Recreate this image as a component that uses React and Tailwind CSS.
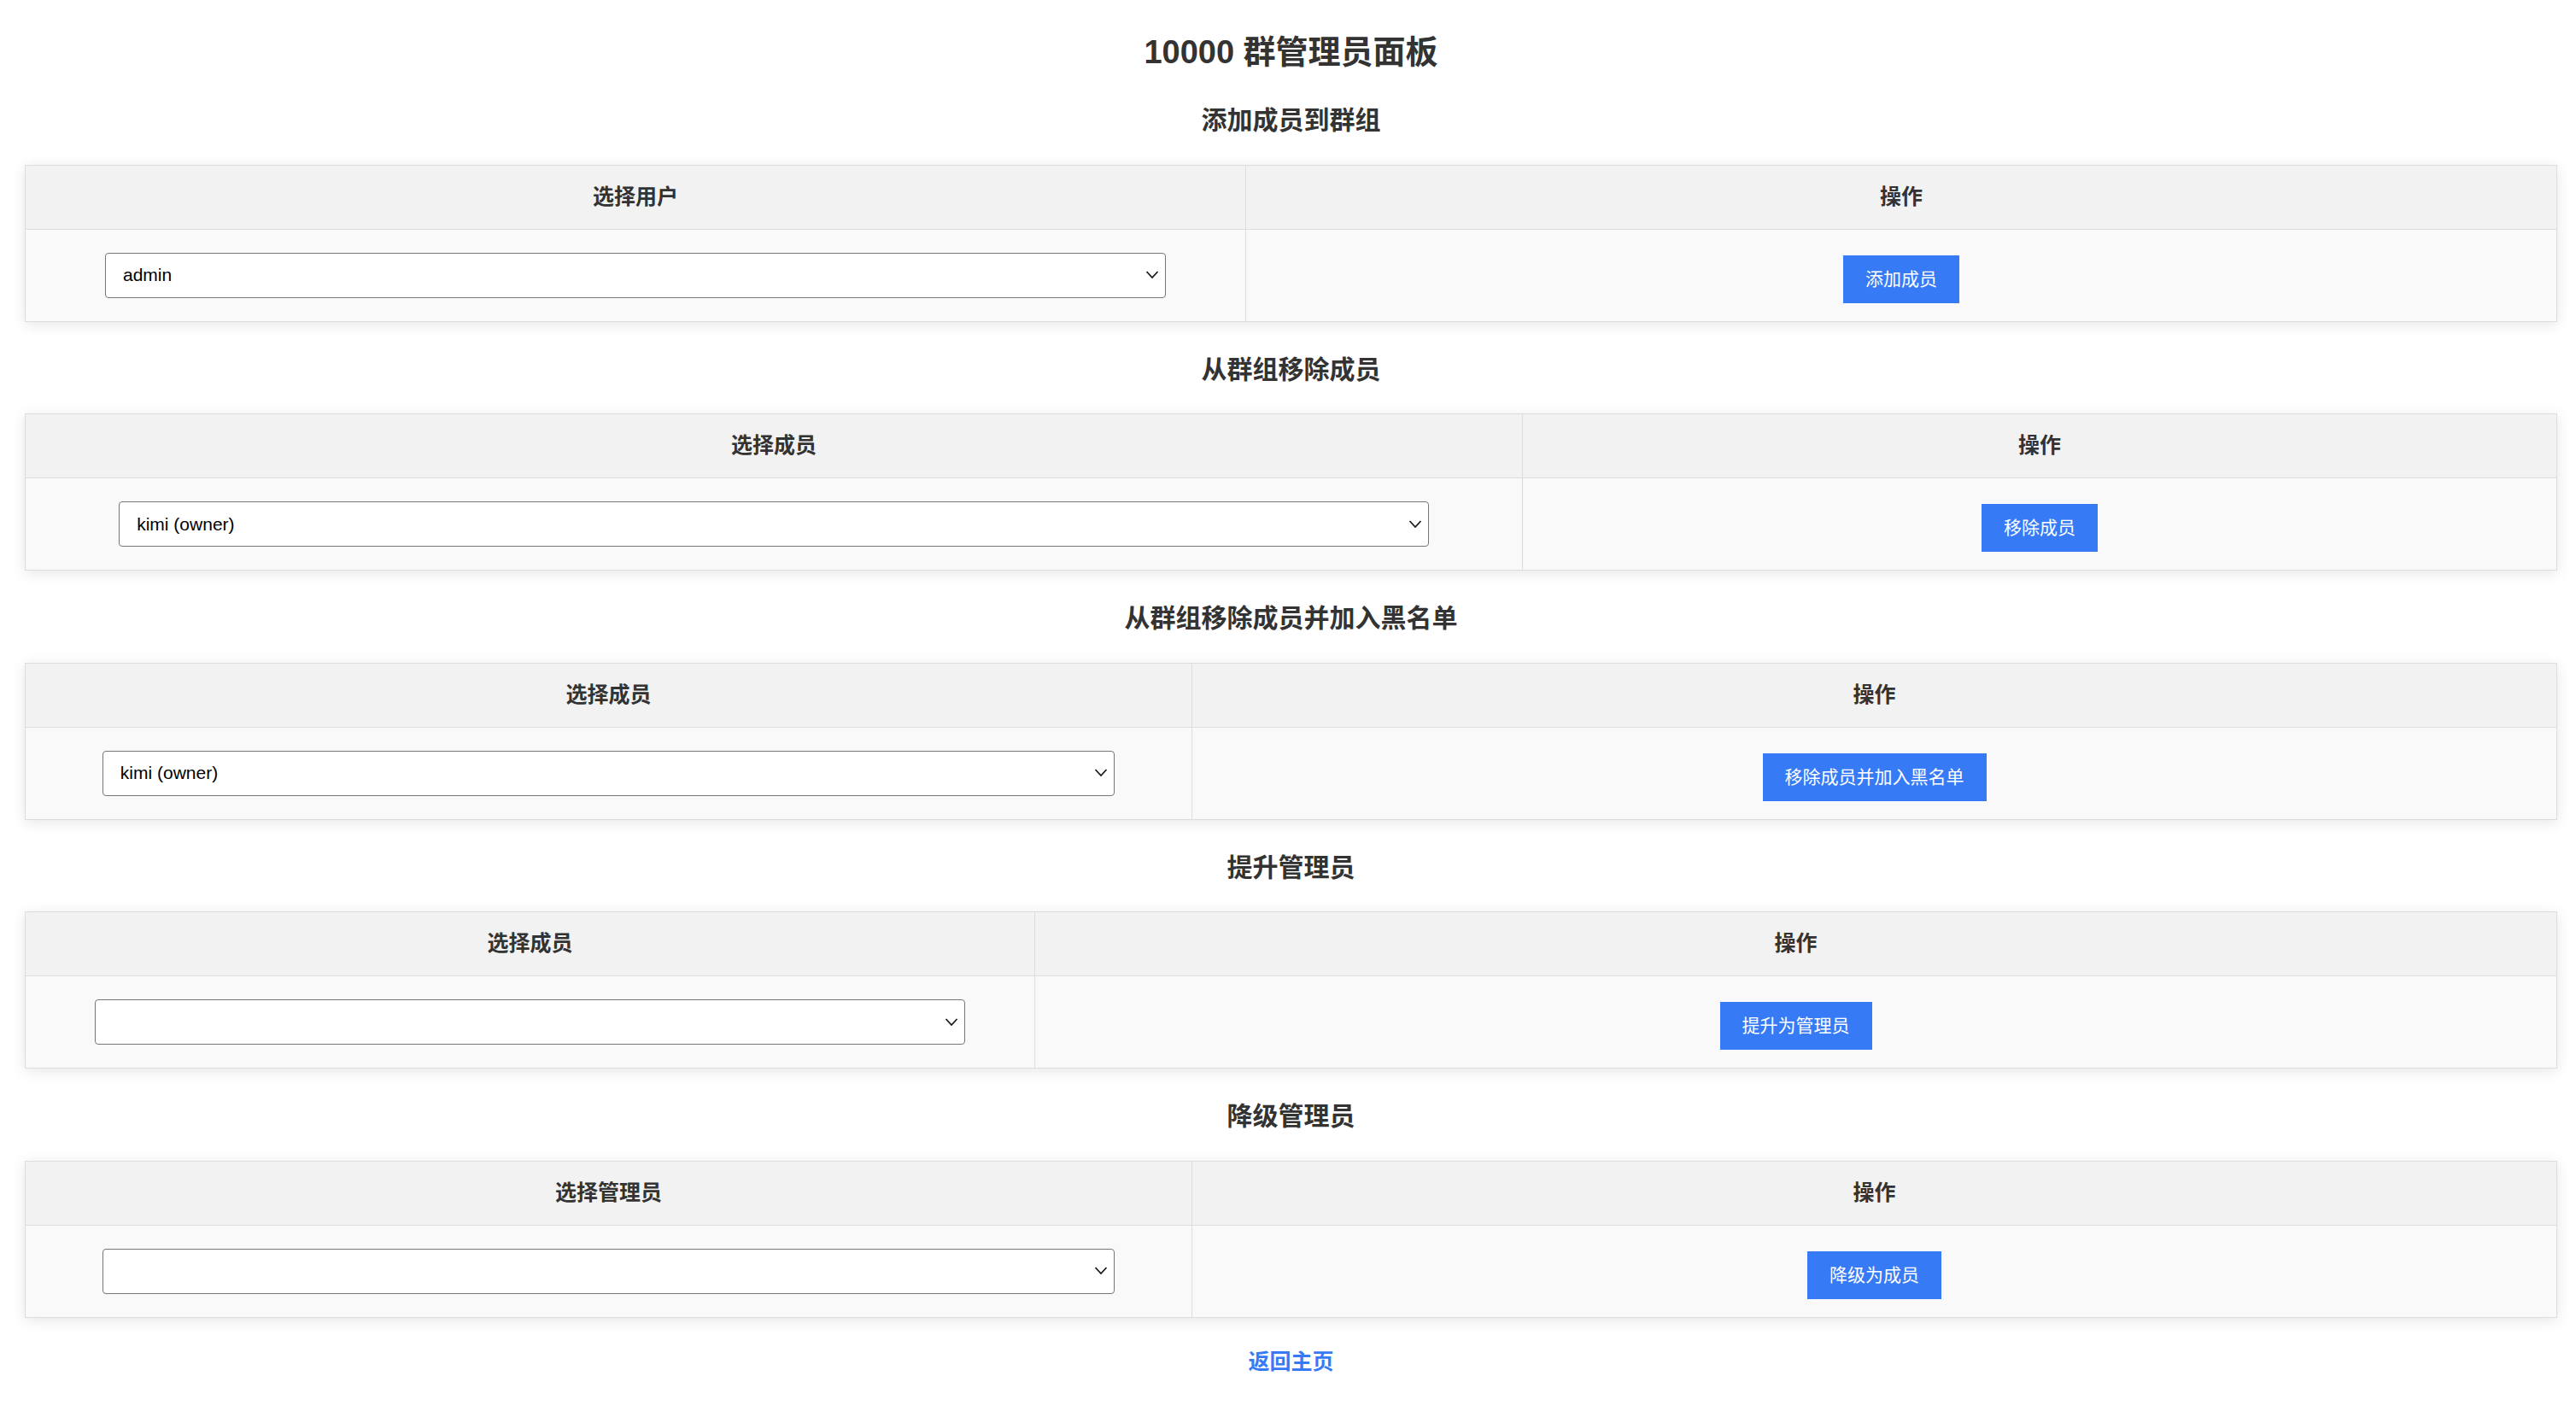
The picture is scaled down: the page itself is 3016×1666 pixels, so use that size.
import React from "react";

const sections = [
  {
    title: "添加成员到群组",
    label: "选择用户",
    cols: "grid-cols-[1429px_1fr]",
    value: "admin",
    action: "添加成员",
  },
  {
    title: "从群组移除成员",
    label: "选择成员",
    cols: "grid-cols-[1753px_1fr]",
    value: "kimi (owner)",
    action: "移除成员",
  },
  {
    title: "从群组移除成员并加入黑名单",
    label: "选择成员",
    cols: "grid-cols-[1366px_1fr]",
    value: "kimi (owner)",
    action: "移除成员并加入黑名单",
  },
  {
    title: "提升管理员",
    label: "选择成员",
    cols: "grid-cols-[1182px_1fr]",
    value: "",
    action: "提升为管理员",
  },
  {
    title: "降级管理员",
    label: "选择管理员",
    cols: "grid-cols-[1366px_1fr]",
    value: "",
    action: "降级为成员",
  },
];

const Chevron = () => (
  <svg
    className="pointer-events-none absolute right-[8px] top-1/2 -translate-y-1/2"
    width="16"
    height="11"
    viewBox="0 0 16 11"
    fill="none"
  >
    <polyline points="1.5,1.5 8,8.5 14.5,1.5" stroke="#1a1a1a" strokeWidth="1.8" />
  </svg>
);

const Section = ({ s }) => {
  return (
    <>
      {/* Section title */}
      <h2 className="mt-[36px] mb-[31.5px] h-[40px] text-center text-[30px] leading-[40px] font-bold text-[#333]">
        {s.title}
      </h2>

      {/* Table */}
      <div className="border border-[#dddddd] bg-[#f9f9f9] shadow-[0_3px_16px_rgba(0,0,0,0.1)]">
        <div className={`grid ${s.cols} h-[75px] border-b border-[#dddddd] bg-[#f2f2f2]`}>
          <div className="flex items-center justify-center border-r border-[#dddddd] text-[25px] font-bold text-[#333]">
            {s.label}
          </div>
          <div className="flex items-center justify-center text-[25px] font-bold text-[#333]">
            操作
          </div>
        </div>
        <div className={`grid ${s.cols} h-[107px]`}>
          <div className="flex items-center justify-center border-r border-[#dddddd] px-[24px]">
            <div className="relative w-[90%]">
              <select
                defaultValue={s.value}
                className="block h-[53px] w-full appearance-none rounded-[4px] border border-[#767676] bg-white pl-[20px] text-[21px] text-black outline-none"
              >
                <option value={s.value}>{s.value}</option>
              </select>
              <Chevron />
            </div>
          </div>
          <div className="flex items-center justify-center">
            <button className="mt-[9px] h-[56px] bg-[#377af6] px-[26px] text-[21px] text-white">
              {s.action}
            </button>
          </div>
        </div>
      </div>
    </>
  );
};

export default function App() {
  return (
    <div className="min-h-[1666px] bg-white pl-[29px] pr-[22px] pt-[37px] font-['Liberation_Sans','Noto_Sans_CJK_SC',sans-serif]">
      <h1 className="h-[48px] text-center text-[38px] leading-[48px] font-bold text-[#333]">
        10000 群管理员面板
      </h1>

      {sections.map((s) => (
        <Section key={s.title} s={s} />
      ))}

      <div className="mt-[36px] text-center">
        <a href="#" className="text-[25px] leading-[30px] font-bold text-[#377af6]">
          返回主页
        </a>
      </div>
    </div>
  );
}
